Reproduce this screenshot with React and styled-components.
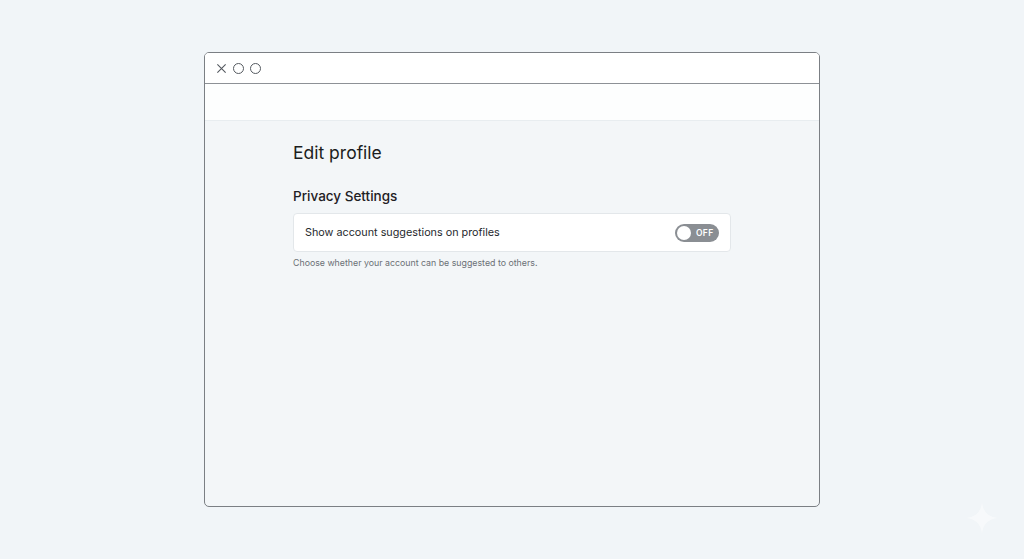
import React from "react";
import styled, { createGlobalStyle } from "styled-components";

const GlobalStyle = createGlobalStyle`
  html, body {
    margin: 0;
    padding: 0;
    background: #f1f5f8;
    font-family: Inter, "Noto Sans", "Liberation Sans", sans-serif;
  }
`;

const App = () => {
  return (
    <>
      <GlobalStyle />
      <Page>
        <Window>
          <TitleBar>
            <CloseIcon viewBox="0 0 12 12">
              <path d="M1.5 1.5 L10.5 10.5 M10.5 1.5 L1.5 10.5" />
            </CloseIcon>
            <Dot />
            <Dot />
          </TitleBar>
          <Toolbar />
          <Content>
            <Heading>Edit profile</Heading>
            <Section>
              <SectionTitle>Privacy Settings</SectionTitle>
              <SettingCard>
                <SettingLabel>Show account suggestions on profiles</SettingLabel>
                <Toggle>
                  <Knob />
                  <ToggleText>OFF</ToggleText>
                </Toggle>
              </SettingCard>
              <HelpText>Choose whether your account can be suggested to others.</HelpText>
            </Section>
          </Content>
        </Window>
        <Sparkle viewBox="0 0 40 40">
          <path d="M20 2 C21 13 27 19 38 20 C27 21 21 27 20 38 C19 27 13 21 2 20 C13 19 19 13 20 2 Z" />
        </Sparkle>
      </Page>
    </>
  );
};

export default App;

const Page = styled.div`
  position: relative;
  width: 1024px;
  height: 559px;
  box-sizing: border-box;
  padding: 52px 0 0 204px;
  overflow: hidden;
`;

const Window = styled.div`
  width: 616px;
  height: 455px;
  box-sizing: border-box;
  border: 1px solid #7b7f84;
  border-radius: 5px;
  background: #f3f6f8;
  overflow: hidden;
  display: flex;
  flex-direction: column;
`;

const TitleBar = styled.div`
  height: 30px;
  flex-shrink: 0;
  background: #ffffff;
  border-bottom: 1px solid #8d9196;
  display: flex;
  align-items: center;
  gap: 6px;
  padding-left: 11px;
`;

const CloseIcon = styled.svg`
  width: 11px;
  height: 11px;
  fill: none;
  stroke: #555a60;
  stroke-width: 1.2;
`;

const Dot = styled.span`
  width: 9px;
  height: 9px;
  border: 1.2px solid #555a60;
  border-radius: 50%;
`;

const Toolbar = styled.div`
  height: 36px;
  flex-shrink: 0;
  background: #fdfefe;
  border-bottom: 1px solid #e8edf0;
`;

const Content = styled.div`
  padding: 21px 0 0 88px;
  display: flex;
  flex-direction: column;
`;

const Heading = styled.h1`
  margin: 0;
  font-size: 17.5px;
  font-weight: 400;
  color: #1b1d20;
  line-height: 22px;
`;

const Section = styled.div`
  margin-top: 23px;
  display: flex;
  flex-direction: column;
  width: 438px;
`;

const SectionTitle = styled.h2`
  margin: 0;
  font-size: 13.5px;
  font-weight: 500;
  color: #1e2024;
  line-height: 18px;
`;

const SettingCard = styled.div`
  margin-top: 8px;
  height: 39px;
  box-sizing: border-box;
  background: #ffffff;
  border: 1px solid #e3e7ea;
  border-radius: 4px;
  display: flex;
  align-items: center;
  justify-content: space-between;
  padding: 0 11px 0 11px;
`;

const SettingLabel = styled.span`
  font-size: 10.8px;
  color: #26292d;
`;

const Toggle = styled.div`
  width: 44px;
  height: 18px;
  border-radius: 9px;
  background: #8a8e93;
  display: flex;
  align-items: center;
  padding: 0 2px;
  box-sizing: border-box;
  gap: 5px;
`;

const Knob = styled.span`
  width: 14px;
  height: 14px;
  border-radius: 50%;
  background: #ffffff;
`;

const ToggleText = styled.span`
  font-size: 8.5px;
  font-weight: 600;
  color: #ffffff;
  letter-spacing: 0.3px;
`;

const HelpText = styled.p`
  margin: 5px 0 0;
  font-size: 8.8px;
  color: #6b7076;
`;

const Sparkle = styled.svg`
  position: absolute;
  left: 964px;
  top: 500px;
  width: 36px;
  height: 36px;
  fill: #ffffff;
  opacity: 0.45;
`;
